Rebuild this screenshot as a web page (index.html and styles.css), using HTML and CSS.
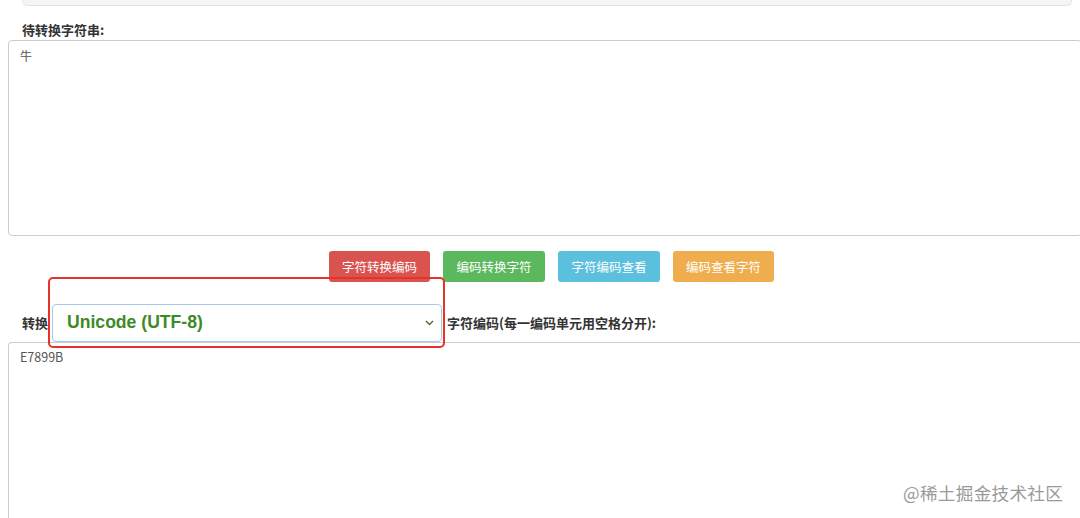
FILE: index.html
```html
<!DOCTYPE html>
<html lang="zh">
<head>
<meta charset="utf-8">
<link rel="stylesheet" href="styles.css">
</head>
<body>
<div class="page">
  <div class="well"></div>
  <div class="label first">待转换字符串:</div>
  <div class="area area-top">牛</div>
  <div class="btn-row">
    <span class="btn red">字符转换编码</span>
    <span class="btn green">编码转换字符</span>
    <span class="btn blue">字符编码查看</span>
    <span class="btn orange">编码查看字符</span>
  </div>
  <div class="sel-row">
    <span class="label inline">转换</span>
    <div class="select">
      <span class="sel-text">Unicode (UTF-8)</span>
      <svg class="chev" width="9" height="6" viewBox="0 0 9 6"><path d="M1 1 L4.5 4.5 L8 1" fill="none" stroke="#4a6a3a" stroke-width="1.4"/></svg>
    </div>
    <span class="label inline after">字符编码(每一编码单元用空格分开):</span>
    <div class="highlight"></div>
  </div>
  <div class="area area-bottom">E7899B</div>
  <div class="watermark">@稀土掘金技术社区</div>
</div>
</body>
</html>
```
FILE: styles.css
```css
* { box-sizing: border-box; }
html, body { margin: 0; padding: 0; background: #fff; overflow: hidden; }
body { width: 1080px; height: 518px; font-family: "Noto Sans CJK SC", "Noto Sans", sans-serif; color: #333; }
.page { position: relative; height: 518px; padding-left: 8px; }
.well {
  height: 6px; margin: 0 8px 0 14px;
  background: #f5f5f5; border: 1px solid #e3e3e3; border-top: none;
  border-radius: 0 0 5px 5px;
}
.label { font-size: 13px; font-weight: 700; color: #333; line-height: 17px; }
.label.first { margin: 15px 0 0 14px; padding-bottom: 2px; }
.area {
  width: 1074px; border: 1px solid #ccc; border-radius: 4px;
  padding: 6px 11px; font-size: 12px; color: #555; line-height: 17px;
  font-family: "Noto Sans CJK SC", "Liberation Sans", sans-serif;
}
.area-top { height: 196px; }
.area-bottom { height: 190px; border-bottom: none; border-radius: 4px 4px 0 0; padding-top: 5px; font-size: 12.5px; }
.btn-row { display: flex; justify-content: center; gap: 13px; padding-left: 15px; margin-top: 15px; }
.btn {
  width: 101px; height: 31px; border-radius: 3px; color: #fff;
  font-size: 12.5px; line-height: 31px; text-align: center;
}
.red { background: #d9534f; }
.green { background: #5cb85c; width: 102px; }
.blue { background: #5bc0de; width: 102px; }
.orange { background: #f0ad4e; }
.sel-row { position: relative; display: flex; align-items: center; margin-top: 21px; height: 39px; }
.label.inline { padding-left: 14px; width: 44px; white-space: nowrap; }
.select {
  width: 390px; height: 38px; border: 1px solid #a8c8ea; border-radius: 4px;
  background: #fff; display: flex; align-items: center; justify-content: space-between;
  padding: 0 7px 0 14px; position: relative; z-index: 1;
}
.sel-text { font-family: "Liberation Sans", Arial, sans-serif; font-weight: 700; font-size: 17.6px; color: #3d8a26; }
.label.after { padding-left: 5px; width: auto; }
.highlight {
  position: absolute; left: 40px; top: -26px; width: 397px; height: 71px;
  border: 2px solid #e5322a; border-radius: 5px; z-index: 2;
}
.watermark {
  position: absolute; left: 903px; top: 480px;
  font-size: 17.6px; color: #9a9a9a; letter-spacing: 0.3px;
}
```
